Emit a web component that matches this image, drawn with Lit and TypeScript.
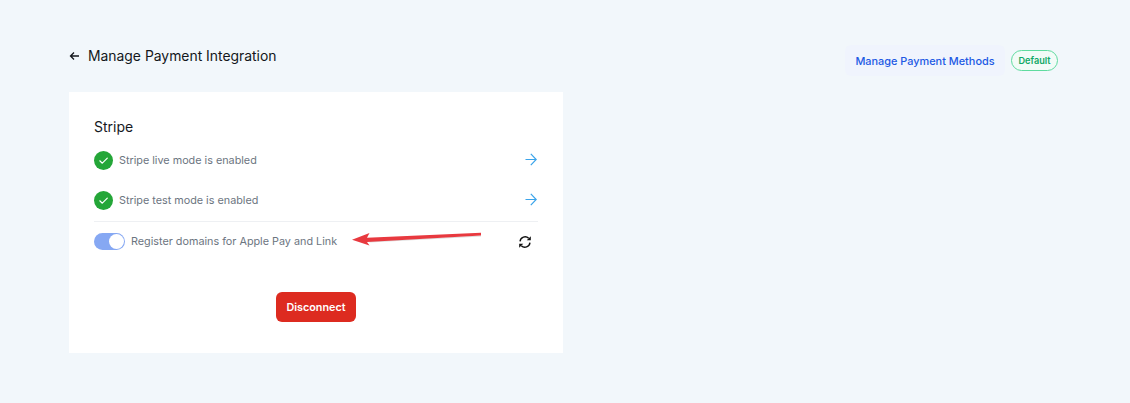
import { LitElement, html, css, svg } from "lit";
import { customElement } from "lit/decorators.js";

const check = html`<svg class="check" width="19" height="19" viewBox="0 0 19 19"><circle cx="9.5" cy="9.5" r="9.5" fill="#24a638"/><path d="M5.8 9.8l2.5 2.4 5-5" fill="none" stroke="#fff" stroke-width="1.2" stroke-linecap="round" stroke-linejoin="round"/></svg>`;
const go = html`<svg class="go" width="12" height="13" viewBox="0 0 12 13"><path d="M0.5 6.5H11M5.8 0.8L11.2 6.5L5.8 12.2" fill="none" stroke="#3ba4ea" stroke-width="1.2"/></svg>`;

@customElement("app-root")
export class AppRoot extends LitElement {
  static styles = css`
    :host {
      display: block;
      width: 1130px;
      height: 403px;
      background: #f2f7fb;
      font-family: Inter, "Liberation Sans", sans-serif;
      overflow: hidden;
    }
    .page {
      display: flex;
      flex-direction: column;
      padding: 44px 72px 0 69px;
      box-sizing: border-box;
    }
    .top {
      display: flex;
      justify-content: space-between;
      align-items: flex-start;
      height: 48px;
    }
    .title {
      display: flex;
      align-items: center;
      gap: 8px;
      height: 24px;
      font-size: 13.9px;
      color: #14171c;
    }
    .actions {
      display: flex;
      align-items: center;
      gap: 6px;
      padding-top: 1px;
    }
    .manage {
      display: flex;
      align-items: center;
      justify-content: center;
      width: 160px;
      height: 31px;
      background: #f0f4fd;
      border-radius: 6px;
      color: #2159e4;
      font-size: 10.9px;
      font-weight: 500;
    }
    .badge {
      display: flex;
      align-items: center;
      justify-content: center;
      box-sizing: border-box;
      width: 47px;
      height: 21px;
      border: 1px solid #5fdb9f;
      border-radius: 11px;
      color: #12a866;
      font-size: 9.2px;
      font-weight: 600;
      background: #f2fbf7;
    }
    .card {
      position: relative;
      box-sizing: border-box;
      width: 494px;
      height: 261px;
      background: #fff;
      padding: 26px 25px 0;
    }
    h2 {
      margin: 0 0 16px;
      font-size: 14px;
      line-height: 17px;
      font-weight: 400;
      color: #16191e;
    }
    .row {
      display: flex;
      align-items: center;
      gap: 6px;
      height: 19px;
      color: #6c757f;
      font-size: 10.8px;
    }
    .row.second {
      margin-top: 21px;
      padding-bottom: 12px;
      border-bottom: 1px solid #eef0f3;
      height: 31px;
      align-items: flex-start;
      width: 444px;
      box-sizing: border-box;
    }
    .go {
      margin: 0 1px 2px auto;
    }
    .second .go {
      margin-top: 2px;
    }
    .second .lbl, .first .lbl { line-height: 19px; }
    .first { width: 444px; }
    .domains {
      display: flex;
      align-items: center;
      gap: 6px;
      height: 19px;
      margin-top: 10px;
      width: 444px;
      color: #6c757f;
      font-size: 10.8px;
    }
    .toggle {
      position: relative;
      width: 31px;
      height: 17px;
      border-radius: 9px;
      background: #86a8f3;
      flex: none;
    }
    .knob {
      position: absolute;
      right: 1px;
      top: 1px;
      width: 15px;
      height: 15px;
      border-radius: 50%;
      background: #fff;
    }
    .sync {
      margin-left: auto;
      margin-right: 6px;
    }
    .arrow {
      position: absolute;
      left: 283px;
      top: 139px;
    }
    .footer {
      display: flex;
      justify-content: center;
      margin-top: 41px;
      width: 444px;
    }
    .disconnect {
      display: flex;
      align-items: center;
      justify-content: center;
      width: 80px;
      height: 30px;
      border-radius: 6px;
      background: #dd2b20;
      color: #fff;
      font-size: 10.8px;
      font-weight: 600;
    }
  `;

  render() {
    return html`
      <div class="page">
        <div class="top">
          <div class="title">
            <svg width="11" height="10" viewBox="0 0 11 10"><path d="M10 5H1.5M5 1.5L1.5 5L5 8.5" fill="none" stroke="#14171c" stroke-width="1.3"/></svg>
            <span>Manage Payment Integration</span>
          </div>
          <div class="actions">
            <div class="manage">Manage Payment Methods</div>
            <div class="badge">Default</div>
          </div>
        </div>
        <div class="card">
          <h2>Stripe</h2>
          <div class="row first">${check}<span class="lbl">Stripe live mode is enabled</span>${go}</div>
          <div class="row second">${check}<span class="lbl">Stripe test mode is enabled</span>${go}</div>
          <div class="domains">
            <div class="toggle"><div class="knob"></div></div>
            <span>Register domains for Apple Pay and Link</span>
            <svg class="sync" width="14" height="14" viewBox="0 0 24 24">
              ${svg`<path d="M3.5 11a8.7 8.7 0 0 1 14.8-5.3" fill="none" stroke="#111" stroke-width="2.4"/>
              <path d="M20.5 13a8.7 8.7 0 0 1-14.8 5.3" fill="none" stroke="#111" stroke-width="2.4"/>
              <path d="M15 9h7V2z" fill="#111"/><path d="M9 15H2v7z" fill="#111"/>`}
            </svg>
          </div>
          <svg class="arrow" width="132" height="20" viewBox="0 0 132 20">
            <path d="M17.5 10L129 4.5V5.4L17.5 11.6Z" fill="#8a8a8a" opacity="0.3"/>
            <path d="M0 8.7L17.5 2L15 6.8L129 1.8V4.6L15 10.9L17.5 14.6Z" fill="#e8393f"/>
          </svg>
          <div class="footer"><div class="disconnect">Disconnect</div></div>
        </div>
      </div>
    `;
  }
}
